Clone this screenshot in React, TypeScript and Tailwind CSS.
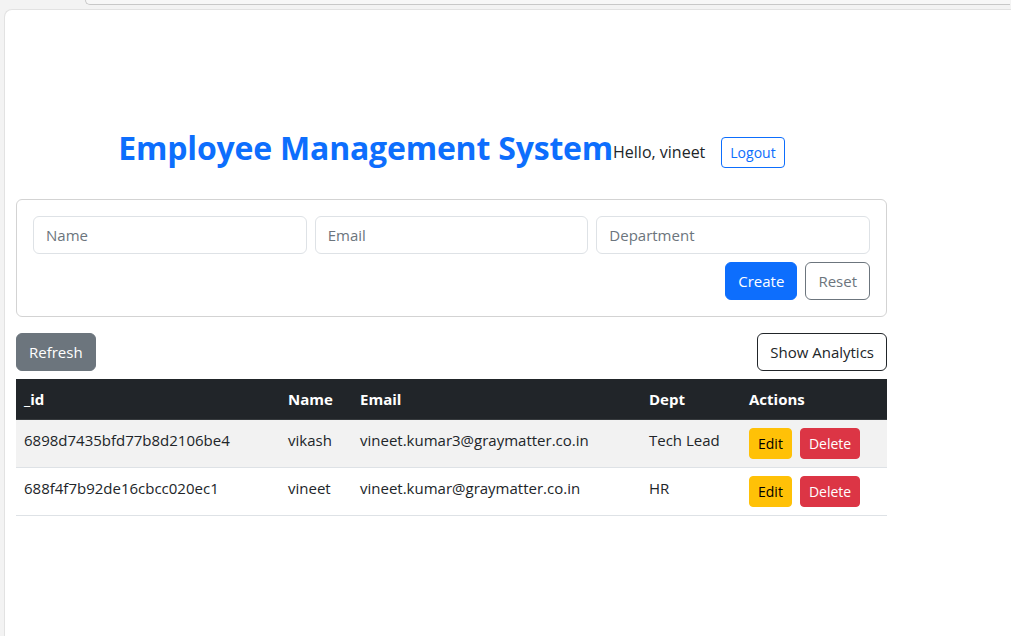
import React from 'react'

const employees = [
  { _id: '6898d7435bfd77b8d2106be4', name: 'vikash', email: 'vineet.kumar3@graymatter.co.in', dept: 'Tech Lead' },
  { _id: '688f4f7b92de16cbcc020ec1', name: 'vineet', email: 'vineet.kumar@graymatter.co.in', dept: 'HR' },
]

function Header() {
  return (
    <div className="flex items-center justify-center pt-[119px]">
      <h1 className="mb-2 text-[32px] leading-[1.2] font-bold text-[#0d6efd] tracking-[-0.2px]">Employee Management System</h1>
      <span className="text-base leading-6 text-[#212529]">Hello, vineet</span>
      <button className="ml-4 rounded-[4px] border border-[#0d6efd] px-2 py-1 text-sm leading-[21px] text-[#0d6efd]">Logout</button>
    </div>
  )
}

function EmployeeForm() {
  return (
    <div className="mt-6 rounded-[6px] border border-[#d3d3d3] p-4">
      <div className="grid grid-cols-3 gap-2">
        {['Name', 'Email', 'Department'].map((p) => (
          <input
            key={p}
            placeholder={p}
            className="h-[38px] w-full rounded-[6px] border border-[#dee2e6] px-3 text-[15px] text-[#212529] outline-none placeholder:text-[#6c757d]"
          />
        ))}
      </div>
      <div className="mt-2 flex justify-end gap-2">
        <button className="h-[38px] rounded-[6px] border border-[#0d6efd] bg-[#0d6efd] px-3 text-[15px] text-white">Create</button>
        <button className="h-[38px] rounded-[6px] border border-[#6c757d] px-3 text-[15px] text-[#6c757d]">Reset</button>
      </div>
    </div>
  )
}

function EmployeeTable() {
  return (
    <table className="mt-2 w-full table-fixed border-collapse text-left align-top text-[15px] text-[#212529]">
      <thead className="bg-[#212529] text-white">
        <tr className="border-b border-[#373b3e]">
          <th className="w-[264px] px-2 py-2 leading-6 font-bold">_id</th>
          <th className="w-[72px] px-2 py-2 leading-6 font-bold">Name</th>
          <th className="w-[289px] px-2 py-2 leading-6 font-bold">Email</th>
          <th className="w-[100px] px-2 py-2 leading-6 font-bold">Dept</th>
          <th className="w-[146px] px-2 py-2 leading-6 font-bold">Actions</th>
        </tr>
      </thead>
      <tbody>
        {employees.map((e, i) => (
          <tr key={e._id} className={`border-b border-[#dee2e6] ${i % 2 === 0 ? 'bg-[#f2f2f2]' : 'bg-white'}`}>
            <td className="px-2 py-2 align-top leading-6">{e._id}</td>
            <td className="px-2 py-2 align-top leading-6">{e.name}</td>
            <td className="px-2 py-2 align-top leading-6 whitespace-nowrap">{e.email}</td>
            <td className="px-2 py-2 align-top leading-6">{e.dept}</td>
            <td className="px-2 py-2 align-top leading-6">
              <div className="flex gap-2">
                <button className="rounded-[4px] border border-[#ffc107] bg-[#ffc107] px-2 py-1 text-sm leading-[21px] text-black">Edit</button>
                <button className="rounded-[4px] border border-[#dc3545] bg-[#dc3545] px-2 py-1 text-sm leading-[21px] text-white">Delete</button>
              </div>
            </td>
          </tr>
        ))}
      </tbody>
    </table>
  )
}

export default function App() {
  return (
    <div className="flex min-h-screen flex-col bg-[#f3f3f3] font-['Open_Sans',sans-serif]">
      <div className="h-[9px] shrink-0 pl-[85px] pr-[1px]">
        <div className="h-[5px] rounded-bl-[10px] border-b border-l border-[#c8c8c8] bg-[#f7f7f7]" />
      </div>
      <div className="ml-[4px] flex-1 rounded-tl-[8px] border-l border-t border-[#e2e2e2] bg-white">
        <div className="ml-[11px] w-[871px]">
          <Header />
          <EmployeeForm />
          <div className="mt-4 flex items-center justify-between">
            <button className="h-[38px] rounded-[6px] border border-[#6c757d] bg-[#6c757d] px-3 text-[15px] text-white">Refresh</button>
            <button className="h-[38px] rounded-[6px] border border-[#212529] px-3 text-[15px] text-[#212529]">Show Analytics</button>
          </div>
          <EmployeeTable />
        </div>
      </div>
    </div>
  )
}
